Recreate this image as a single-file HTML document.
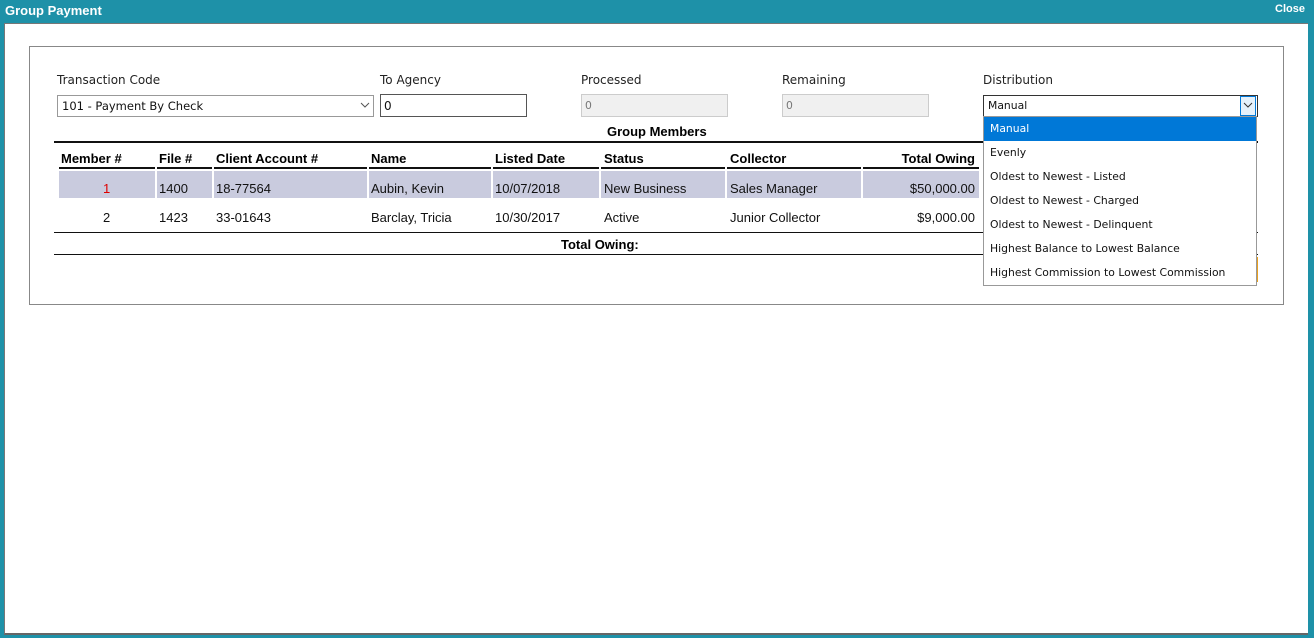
<!DOCTYPE html>
<html><head><style>
body{margin:0;width:1314px;height:638px;background:#1e91a8;position:relative;overflow:hidden;font-family:"Liberation Sans",Arial,sans-serif;}
.a{position:absolute;}
.t{font-size:13px;color:#111;white-space:nowrap;}
.h{font-size:13px;font-weight:bold;color:#000;white-space:nowrap;}
.lbl{font-family:"DejaVu Sans","Liberation Sans",sans-serif;font-size:12px;color:#222;}
.dd{font-family:"DejaVu Sans","Liberation Sans",sans-serif;font-size:10.8px;color:#111;white-space:nowrap;}
</style></head><body>
<div class="a" style="left:5px;top:3px;color:#fff;font-weight:bold;font-size:13px;">Group Payment</div>
<div class="a" style="left:1275px;top:3px;color:#fff;font-weight:bold;font-size:11px;">Close</div>
<div class="a" style="left:4px;top:23px;width:1303px;height:609px;background:#fff;border-top:1px solid #777;border-left:1px solid #777;border-bottom:2px solid #666;"></div>
<div class="a" style="left:29px;top:46px;width:1253px;height:257px;border:1px solid #888;"></div>

<div class="a lbl" style="left:57px;top:73px;">Transaction Code</div>
<div class="a lbl" style="left:380px;top:73px;">To Agency</div>
<div class="a lbl" style="left:581px;top:73px;">Processed</div>
<div class="a lbl" style="left:782px;top:73px;">Remaining</div>
<div class="a lbl" style="left:983px;top:73px;">Distribution</div>

<div class="a" style="left:57px;top:95px;width:315px;height:20px;border:1px solid #999;"></div>
<div class="a dd" style="left:62px;top:99px;font-size:11.5px;">101 - Payment By Check</div>
<svg class="a" style="left:360px;top:102px" width="10" height="6"><path d="M1 1L5 5L9 1" stroke="#555" fill="none"/></svg>
<div class="a" style="left:380px;top:94px;width:145px;height:21px;border:1px solid #555;"></div>
<div class="a dd" style="left:384px;top:99px;font-size:12px;">0</div>
<div class="a" style="left:581px;top:94px;width:145px;height:21px;border:1px solid #ccc;background:#f0f0f0;"></div>
<div class="a dd" style="left:585px;top:99px;color:#777;">0</div>
<div class="a" style="left:782px;top:94px;width:145px;height:21px;border:1px solid #ccc;background:#f0f0f0;"></div>
<div class="a dd" style="left:786px;top:99px;color:#777;">0</div>

<div class="a h" style="left:607px;top:124px;">Group Members</div>
<div class="a" style="left:54px;top:141px;width:1204px;height:2px;background:#111;"></div>
<div class="a h" style="left:61px;top:151px;">Member #</div>
<div class="a h" style="left:159px;top:151px;">File #</div>
<div class="a h" style="left:216px;top:151px;">Client Account #</div>
<div class="a h" style="left:371px;top:151px;">Name</div>
<div class="a h" style="left:495px;top:151px;">Listed Date</div>
<div class="a h" style="left:604px;top:151px;">Status</div>
<div class="a h" style="left:730px;top:151px;">Collector</div>
<div class="a h" style="left:863px;top:151px;width:112px;text-align:right;">Total Owing</div>
<div class="a" style="left:59px;top:167px;width:96px;height:2px;background:#111"></div>
<div class="a" style="left:157px;top:167px;width:55px;height:2px;background:#111"></div>
<div class="a" style="left:214px;top:167px;width:153px;height:2px;background:#111"></div>
<div class="a" style="left:369px;top:167px;width:122px;height:2px;background:#111"></div>
<div class="a" style="left:493px;top:167px;width:106px;height:2px;background:#111"></div>
<div class="a" style="left:601px;top:167px;width:124px;height:2px;background:#111"></div>
<div class="a" style="left:727px;top:167px;width:134px;height:2px;background:#111"></div>
<div class="a" style="left:863px;top:167px;width:116px;height:2px;background:#111"></div>
<div class="a" style="left:59px;top:171px;width:96px;height:27px;background:#c9cbde"></div>
<div class="a" style="left:157px;top:171px;width:55px;height:27px;background:#c9cbde"></div>
<div class="a" style="left:214px;top:171px;width:153px;height:27px;background:#c9cbde"></div>
<div class="a" style="left:369px;top:171px;width:122px;height:27px;background:#c9cbde"></div>
<div class="a" style="left:493px;top:171px;width:106px;height:27px;background:#c9cbde"></div>
<div class="a" style="left:601px;top:171px;width:124px;height:27px;background:#c9cbde"></div>
<div class="a" style="left:727px;top:171px;width:134px;height:27px;background:#c9cbde"></div>
<div class="a" style="left:863px;top:171px;width:116px;height:27px;background:#c9cbde"></div>
<div class="a t" style="left:103px;top:181px;color:#d00;">1</div>
<div class="a t" style="left:159px;top:181px;">1400</div>
<div class="a t" style="left:216px;top:181px;">18-77564</div>
<div class="a t" style="left:371px;top:181px;">Aubin, Kevin</div>
<div class="a t" style="left:495px;top:181px;">10/07/2018</div>
<div class="a t" style="left:604px;top:181px;">New Business</div>
<div class="a t" style="left:730px;top:181px;">Sales Manager</div>
<div class="a t" style="left:863px;top:181px;width:112px;text-align:right;">$50,000.00</div>
<div class="a t" style="left:103px;top:210px;">2</div>
<div class="a t" style="left:159px;top:210px;">1423</div>
<div class="a t" style="left:216px;top:210px;">33-01643</div>
<div class="a t" style="left:371px;top:210px;">Barclay, Tricia</div>
<div class="a t" style="left:495px;top:210px;">10/30/2017</div>
<div class="a t" style="left:604px;top:210px;">Active</div>
<div class="a t" style="left:730px;top:210px;">Junior Collector</div>
<div class="a t" style="left:863px;top:210px;width:112px;text-align:right;">$9,000.00</div>
<div class="a" style="left:54px;top:232px;width:1204px;height:1px;background:#111;"></div>
<div class="a h" style="left:561px;top:237px;">Total Owing:</div>
<div class="a" style="left:54px;top:254px;width:1204px;height:1px;background:#111;"></div>
<div class="a" style="left:1257px;top:257px;width:1px;height:25px;background:#e8a020;"></div>

<div class="a" style="left:983px;top:95px;width:273px;height:20px;border:1px solid #333;background:#fff;"></div>
<div class="a" style="left:1240px;top:96px;width:16px;height:20px;background:#e5f1fb;border:1px solid #0078d7;box-sizing:border-box;"></div>
<svg class="a" style="left:1243px;top:102px" width="10" height="6"><path d="M1 1L5 5L9 1" stroke="#333" fill="none"/></svg>
<div class="a dd" style="left:988px;top:99px;">Manual</div>
<div class="a" style="left:983px;top:116px;width:272px;height:168px;border:1px solid #999;background:#fff;"></div>
<div class="a" style="left:984px;top:117px;width:272px;height:24px;background:#0078d7;"></div>
<div class="a dd" style="left:990px;top:122px;color:#fff;">Manual</div>
<div class="a dd" style="left:990px;top:146px;">Evenly</div>
<div class="a dd" style="left:990px;top:170px;">Oldest to Newest - Listed</div>
<div class="a dd" style="left:990px;top:194px;">Oldest to Newest - Charged</div>
<div class="a dd" style="left:990px;top:218px;">Oldest to Newest - Delinquent</div>
<div class="a dd" style="left:990px;top:242px;">Highest Balance to Lowest Balance</div>
<div class="a dd" style="left:990px;top:266px;">Highest Commission to Lowest Commission</div>
</body></html>
